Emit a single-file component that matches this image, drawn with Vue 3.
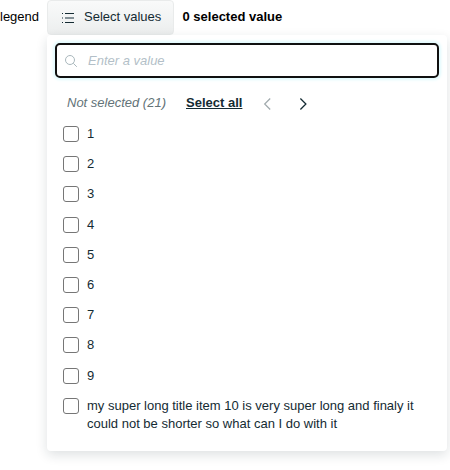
<script setup>
import { ref } from 'vue'

const query = ref('')
const items = ref([
  ...Array.from({ length: 9 }, (_, i) => ({ label: String(i + 1), checked: false })),
  {
    label: 'my super long title item 10 is very super long and finaly it could not be shorter so what can I do with it',
    checked: false,
  },
])
</script>

<template>
  <div class="picker">
    <div class="bar">
      <span class="legend">legend</span>
      <button class="trigger" type="button">
        <svg class="list-icon" width="14" height="12" viewBox="0 0 14 12" shape-rendering="crispEdges">
          <path d="M0 1.5h1M3 1.5h9M0 10.5h1M3 10.5h9" />
          <path class="muted" d="M0 6h1M3 6h9" />
        </svg>
        <span>Select values</span>
      </button>
      <strong class="count">0 selected value</strong>
    </div>

    <section class="panel">
      <label class="search">
        <svg width="13" height="13" viewBox="0 0 13 13">
          <circle cx="5" cy="5" r="4.5" />
          <path d="M8.3 8.3l3.5 3.5" />
        </svg>
        <input v-model="query" type="text" placeholder="Enter a value" />
      </label>

      <div class="tools">
        <em>Not selected (21)</em>
        <button class="all" type="button">Select all</button>
        <button class="nav prev" type="button" disabled>
          <svg width="8" height="12" viewBox="0 0 8 12"><path d="M7.2 .5L1.7 6l5.5 5.5" /></svg>
        </button>
        <button class="nav next" type="button">
          <svg width="8" height="12" viewBox="0 0 8 12"><path d="M1.4 .5L6.9 6l-5.5 5.5" /></svg>
        </button>
      </div>

      <ul class="list">
        <li v-for="item in items" :key="item.label">
          <label>
            <input v-model="item.checked" type="checkbox" />
            <span>{{ item.label }}</span>
          </label>
        </li>
      </ul>
    </section>
  </div>
</template>

<style>
body {
  margin: 0;
  background: #fff;
}
</style>

<style scoped>
.picker {
  width: 450px;
  height: 470px;
  overflow: hidden;
  font: 13px/18.2px "Liberation Sans", Arial, sans-serif;
  color: #142b33;
}
button {
  font: inherit;
  color: inherit;
  border: 0;
  padding: 0;
  background: none;
}
svg {
  display: block;
  flex: none;
  fill: none;
  stroke: #142b33;
}
.bar {
  display: flex;
  align-items: center;
  height: 35px;
  color: #000;
}
.legend {
  width: 47px;
  padding-bottom: 1px;
}
.trigger {
  box-sizing: border-box;
  display: flex;
  align-items: center;
  width: 127px;
  height: 35px;
  padding: 0 0 1px 14px;
  border: 1px solid #e9ebeb;
  border-radius: 4px;
  background: linear-gradient(#f9fafa, #eceeee);
  color: #142b33;
}
.list-icon {
  margin: 2px 8px 0 0;
}
.list-icon .muted {
  stroke: #849197;
  stroke-width: 2;
}
.count {
  margin-left: 8.5px;
  padding-bottom: 1px;
}
.panel {
  box-sizing: border-box;
  position: relative;
  width: 400px;
  height: 416px;
  margin-left: 47px;
  padding: 8px;
  border-radius: 4px;
  background: #fff;
  box-shadow: 0 4px 12px rgba(20, 43, 51, 0.14);
}
.search {
  box-sizing: border-box;
  display: flex;
  align-items: center;
  height: 35px;
  padding-left: 8px;
  border: 2px solid #101010;
  border-radius: 5px;
  box-shadow: 0 0 3px 2px #e0fafd;
}
.search svg {
  margin-top: 2px;
  stroke: #a9b7bc;
}
.search input {
  flex: 1;
  min-width: 0;
  margin-left: 10px;
  padding: 2px 0 0;
  border: 0;
  outline: 0;
  background: none;
  font: inherit;
  font-style: italic;
}
.search input::placeholder {
  color: #b3bfc8;
  opacity: 1;
}
.tools {
  display: flex;
  align-items: center;
  height: 18px;
  margin-top: 16px;
  padding-left: 12px;
}
.tools em {
  width: 119px;
  color: #637378;
}
.all {
  width: 57px;
  font-weight: bold;
  text-align: left;
  text-decoration: underline;
  white-space: nowrap;
}
.nav {
  margin-top: 2px;
}
.nav svg {
  stroke-width: 1.25;
}
.prev {
  margin-left: 20px;
}
.prev svg {
  stroke: #a1aaad;
}
.next {
  margin-left: 28px;
}
.list {
  display: grid;
  gap: 12px;
  margin: 0;
  padding: 12.95px 8px 0;
  list-style: none;
}
.list label {
  display: flex;
  align-items: flex-start;
}
.list input {
  appearance: none;
  box-sizing: border-box;
  flex: none;
  width: 16px;
  height: 16px;
  margin: 1px 8px 0 0;
  border: 1px solid #767676;
  border-radius: 3px;
  background: #fff;
}
</style>
